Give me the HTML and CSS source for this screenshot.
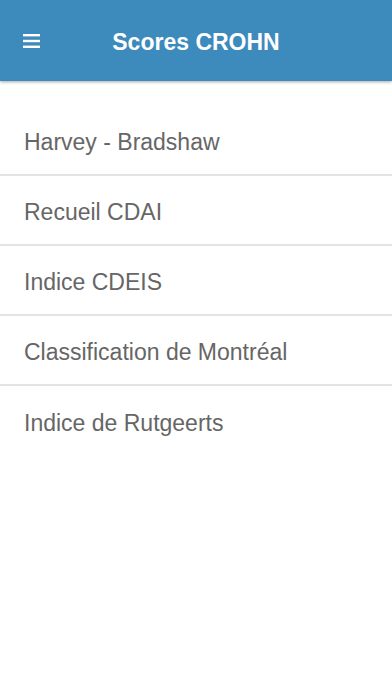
FILE: index.html
```html
<!DOCTYPE html>
<html lang="fr">
<head>
<meta charset="utf-8">
<title>Scores CROHN</title>
<link rel="stylesheet" href="styles.css">
</head>
<body>
<header class="bar">
  <button class="menu" aria-label="Menu">
    <svg width="17" height="14" viewBox="0 0 17 14"><rect x="0" y="0" width="17" height="2.4" fill="#fff"/><rect x="0" y="5.8" width="17" height="2.4" fill="#fff"/><rect x="0" y="11.6" width="17" height="2.4" fill="#fff"/></svg>
  </button>
  <h1 class="title">Scores CROHN</h1>
</header>
<ul class="list">
  <li class="item">Harvey - Bradshaw</li>
  <li class="item">Recueil CDAI</li>
  <li class="item">Indice CDEIS</li>
  <li class="item">Classification de Montréal</li>
  <li class="item">Indice de Rutgeerts</li>
</ul>
</body>
</html>
```
FILE: styles.css
```css
html, body {
  margin: 0;
  padding: 0;
  background: #fff;
  font-family: "Liberation Sans", Arial, sans-serif;
}
.bar {
  position: relative;
  height: 81px;
  background: #3d8abd;
  box-shadow: 0 1px 3px rgba(0,0,0,0.35);
  display: flex;
  align-items: center;
  justify-content: center;
  padding-top: 3px;
  box-sizing: border-box;
}
.menu {
  position: absolute;
  left: 23px;
  top: 34px;
  background: none;
  border: 0;
  padding: 0;
  line-height: 0;
}
.title {
  margin: 0;
  color: #fff;
  font-size: 23px;
  font-weight: bold;
}
.list {
  list-style: none;
  margin: 25px 0 0;
  padding: 0;
}
.item {
  display: flex;
  align-items: center;
  padding-left: 24px;
  padding-top: 5px;
  box-sizing: border-box;
  height: 70px;
  font-size: 23px;
  color: #666;
  border-bottom: 2px solid #e4e4e4;
}
.item:last-child {
  border-bottom: 0;
}
```
